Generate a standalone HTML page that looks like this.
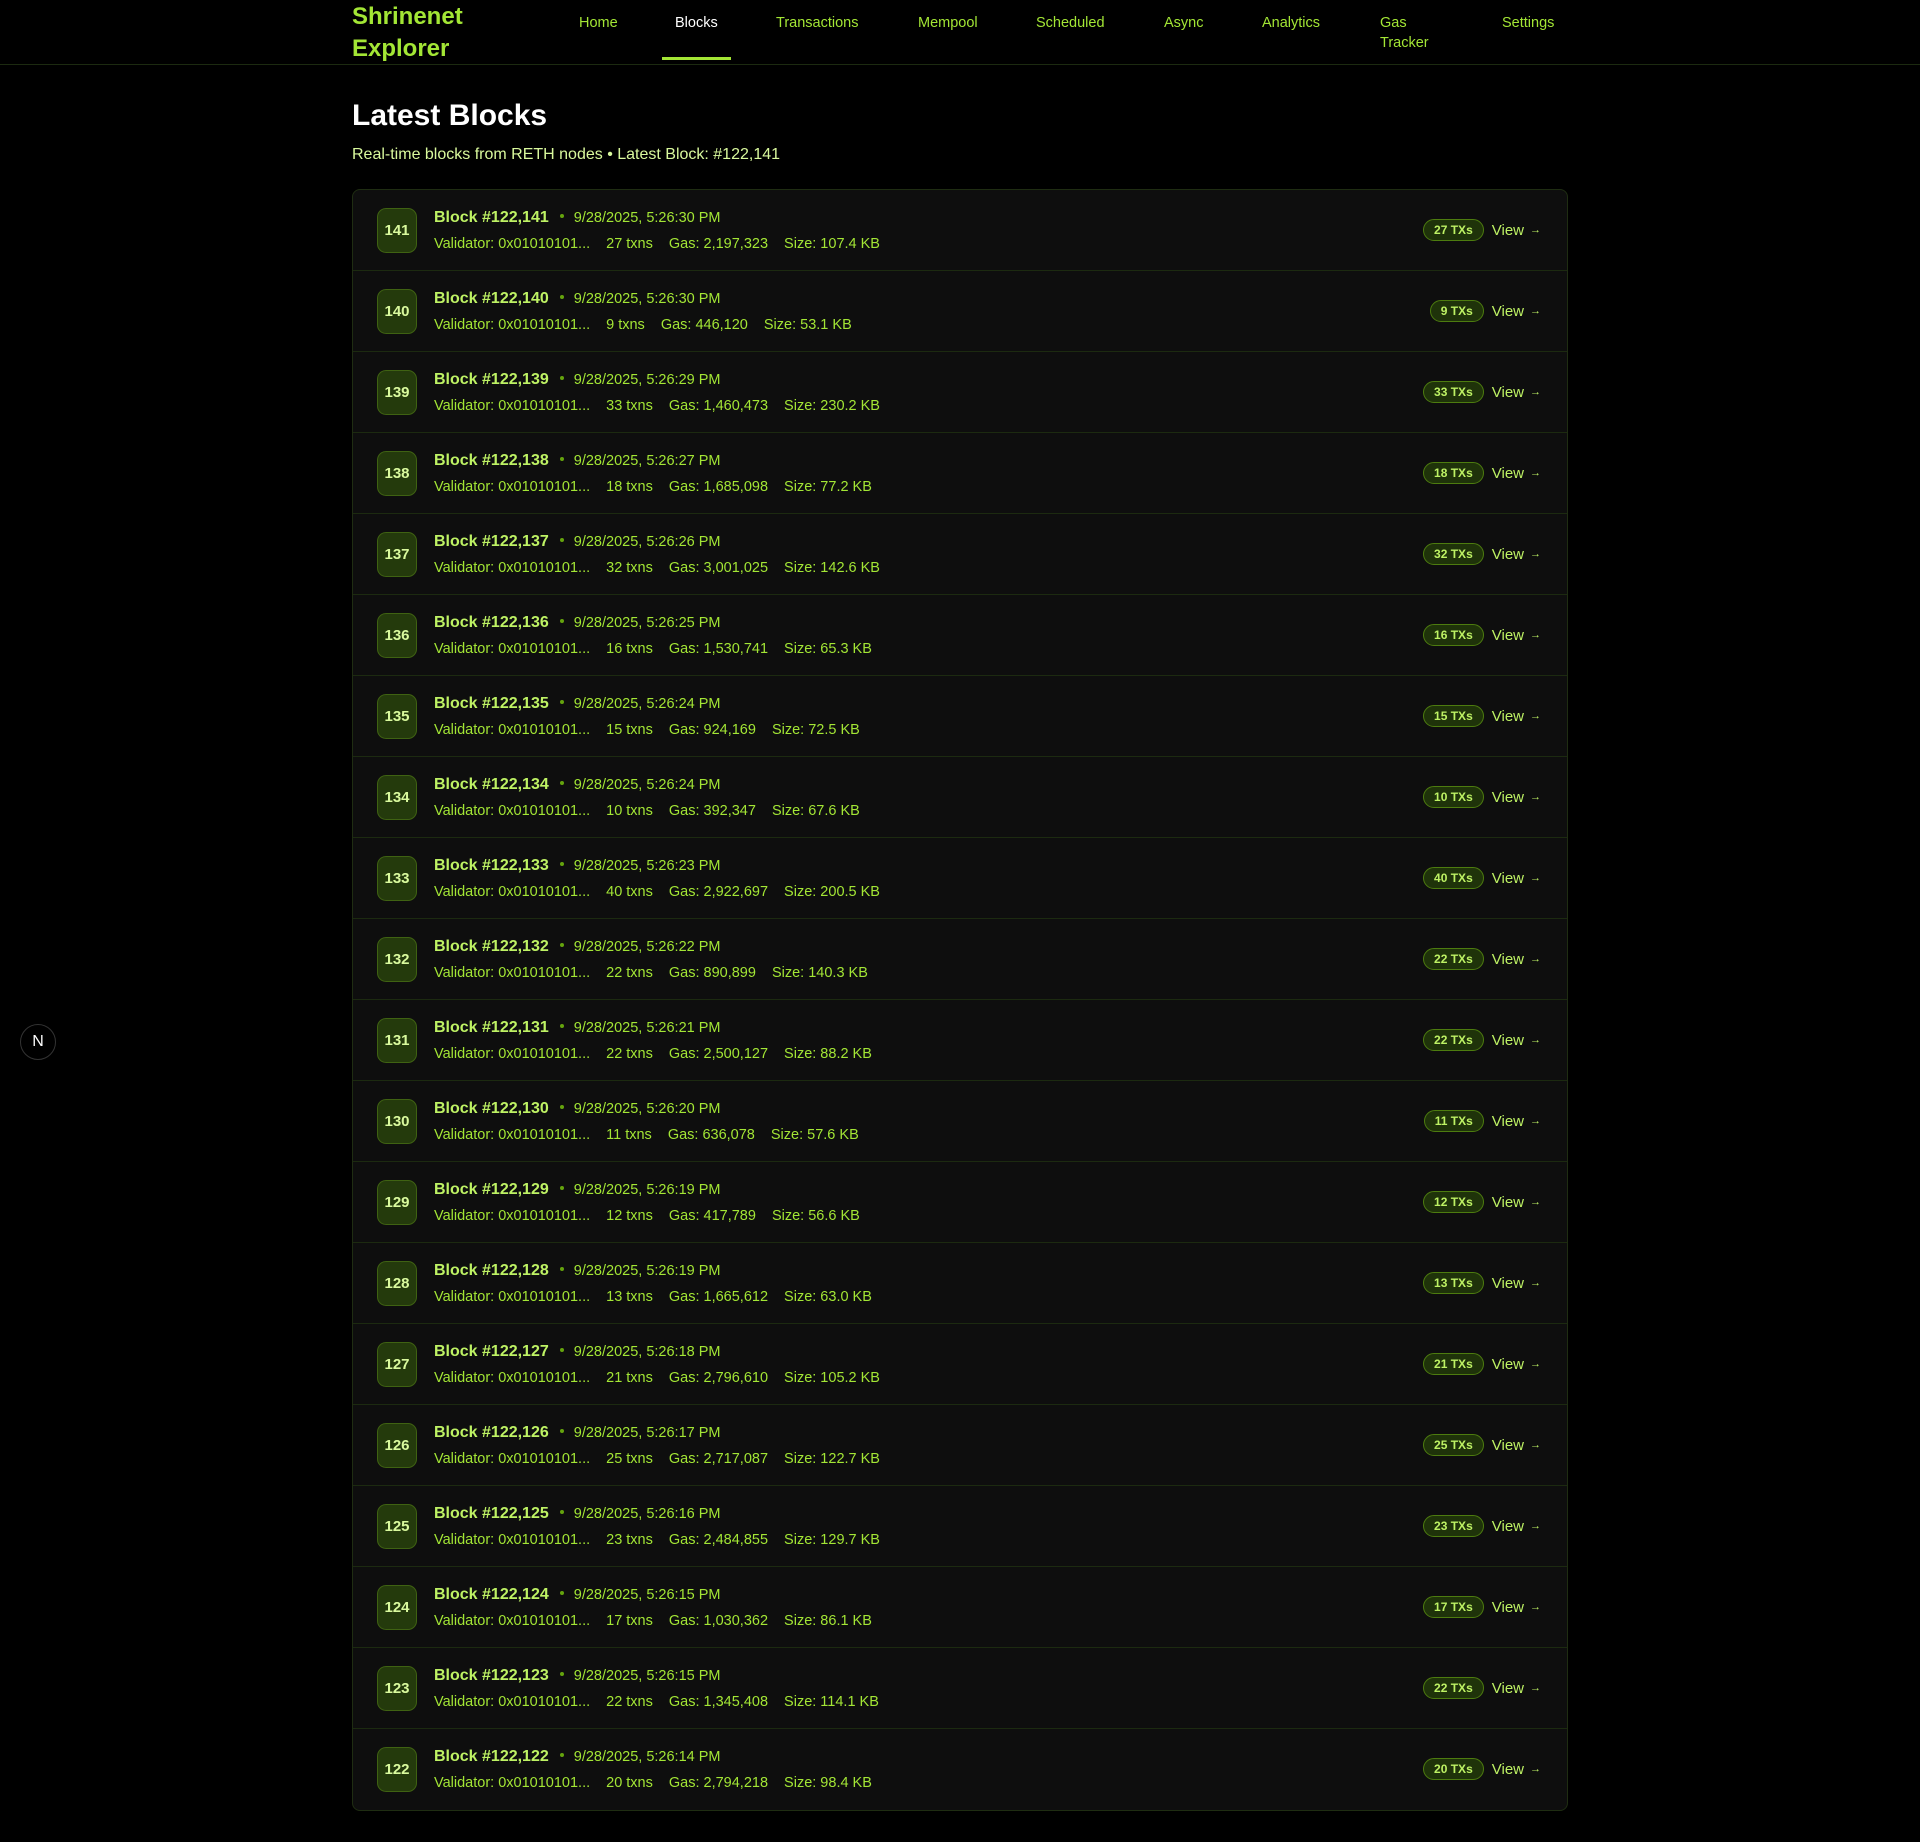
<!DOCTYPE html>
<html><head><meta charset="utf-8"><style>
*{box-sizing:border-box;margin:0;padding:0}
body{background:#000;width:1920px;height:1842px;font-family:"Liberation Sans",sans-serif;color:#a3e635;position:relative;overflow:hidden}
.hdr{height:65px;border-bottom:1px solid #1c2a10;position:relative}
.logo{position:absolute;left:352px;top:1px;font-size:24px;font-weight:bold;line-height:32px;color:#a3e635}
.nav a{position:absolute;top:13px;font-size:14.5px;line-height:20px;color:#a3e635;text-decoration:none}
.nav a.act{color:#fff}
.ul{position:absolute;left:662px;top:57px;width:69px;height:3px;background:#a3e635}
h1{position:absolute;left:352px;top:99px;font-size:30px;color:#fff;font-weight:bold}
.sub{position:absolute;left:352px;top:146px;font-size:16px;color:#d9f99d}
.card{position:absolute;left:352px;top:189px;width:1216px;height:1622px;background:#0e0e0e;border:1px solid #1f2d12;border-radius:8px;overflow:hidden}
.row{height:81px;border-bottom:1px solid #1c2a10;position:relative}
.row:last-child{border-bottom:none}
.bd{position:absolute;left:24px;top:18px;width:40px;height:45px;background:#243a0c;border:1px solid #3f6212;border-radius:9px;color:#d9f99d;font-weight:bold;font-size:15px;display:flex;align-items:center;justify-content:center}
.t{position:absolute;left:81px;top:19px;font-size:16px;font-weight:bold;color:#bef264;white-space:nowrap}
.t i{display:inline-block;width:4px;height:4px;border-radius:2px;background:#65a30d;margin:0 10px 3px 11px;vertical-align:middle}
.t span{font-weight:normal;font-size:14.5px;color:#a3e635}
.d{position:absolute;left:81px;top:46px;font-size:14.5px;white-space:nowrap}
.d span{margin-right:16px}
.r{position:absolute;right:26px;top:29px;display:flex;align-items:center}
.p{height:22px;padding:0 10px;border:1px solid #4d7c0f;background:#1f330a;border-radius:11px;font-size:12px;font-weight:bold;color:#bef264;line-height:20px;margin-right:8px}
.v{font-size:15px;color:#bef264;display:flex;align-items:center}
.v small{font-size:11px;margin-left:6px}
.n{position:absolute;left:20px;top:1024px;width:36px;height:36px;border-radius:18px;border:1.5px solid #333;background:#000;color:#fff;font-size:16px;display:flex;align-items:center;justify-content:center}
</style></head><body>
<div class="hdr">
<div class="logo">Shrinenet<br>Explorer</div>
<div class="nav">
<a style="left:579px">Home</a>
<a class="act" style="left:675px">Blocks</a>
<a style="left:776px">Transactions</a>
<a style="left:918px">Mempool</a>
<a style="left:1036px">Scheduled</a>
<a style="left:1164px">Async</a>
<a style="left:1262px">Analytics</a>
<a style="left:1380px">Gas<br>Tracker</a>
<a style="left:1502px">Settings</a>
</div>
<div class="ul"></div>
</div>
<h1>Latest Blocks</h1>
<div class="sub">Real-time blocks from RETH nodes • Latest Block: #122,141</div>
<div class="card">
<div class="row"><div class="bd">141</div><div class="t">Block #122,141<i></i><span>9/28/2025, 5:26:30 PM</span></div><div class="d"><span>Validator: 0x01010101...</span><span>27 txns</span><span>Gas: 2,197,323</span><span>Size: 107.4 KB</span></div><div class="r"><div class="p">27 TXs</div><div class="v">View<small>→</small></div></div></div>
<div class="row"><div class="bd">140</div><div class="t">Block #122,140<i></i><span>9/28/2025, 5:26:30 PM</span></div><div class="d"><span>Validator: 0x01010101...</span><span>9 txns</span><span>Gas: 446,120</span><span>Size: 53.1 KB</span></div><div class="r"><div class="p">9 TXs</div><div class="v">View<small>→</small></div></div></div>
<div class="row"><div class="bd">139</div><div class="t">Block #122,139<i></i><span>9/28/2025, 5:26:29 PM</span></div><div class="d"><span>Validator: 0x01010101...</span><span>33 txns</span><span>Gas: 1,460,473</span><span>Size: 230.2 KB</span></div><div class="r"><div class="p">33 TXs</div><div class="v">View<small>→</small></div></div></div>
<div class="row"><div class="bd">138</div><div class="t">Block #122,138<i></i><span>9/28/2025, 5:26:27 PM</span></div><div class="d"><span>Validator: 0x01010101...</span><span>18 txns</span><span>Gas: 1,685,098</span><span>Size: 77.2 KB</span></div><div class="r"><div class="p">18 TXs</div><div class="v">View<small>→</small></div></div></div>
<div class="row"><div class="bd">137</div><div class="t">Block #122,137<i></i><span>9/28/2025, 5:26:26 PM</span></div><div class="d"><span>Validator: 0x01010101...</span><span>32 txns</span><span>Gas: 3,001,025</span><span>Size: 142.6 KB</span></div><div class="r"><div class="p">32 TXs</div><div class="v">View<small>→</small></div></div></div>
<div class="row"><div class="bd">136</div><div class="t">Block #122,136<i></i><span>9/28/2025, 5:26:25 PM</span></div><div class="d"><span>Validator: 0x01010101...</span><span>16 txns</span><span>Gas: 1,530,741</span><span>Size: 65.3 KB</span></div><div class="r"><div class="p">16 TXs</div><div class="v">View<small>→</small></div></div></div>
<div class="row"><div class="bd">135</div><div class="t">Block #122,135<i></i><span>9/28/2025, 5:26:24 PM</span></div><div class="d"><span>Validator: 0x01010101...</span><span>15 txns</span><span>Gas: 924,169</span><span>Size: 72.5 KB</span></div><div class="r"><div class="p">15 TXs</div><div class="v">View<small>→</small></div></div></div>
<div class="row"><div class="bd">134</div><div class="t">Block #122,134<i></i><span>9/28/2025, 5:26:24 PM</span></div><div class="d"><span>Validator: 0x01010101...</span><span>10 txns</span><span>Gas: 392,347</span><span>Size: 67.6 KB</span></div><div class="r"><div class="p">10 TXs</div><div class="v">View<small>→</small></div></div></div>
<div class="row"><div class="bd">133</div><div class="t">Block #122,133<i></i><span>9/28/2025, 5:26:23 PM</span></div><div class="d"><span>Validator: 0x01010101...</span><span>40 txns</span><span>Gas: 2,922,697</span><span>Size: 200.5 KB</span></div><div class="r"><div class="p">40 TXs</div><div class="v">View<small>→</small></div></div></div>
<div class="row"><div class="bd">132</div><div class="t">Block #122,132<i></i><span>9/28/2025, 5:26:22 PM</span></div><div class="d"><span>Validator: 0x01010101...</span><span>22 txns</span><span>Gas: 890,899</span><span>Size: 140.3 KB</span></div><div class="r"><div class="p">22 TXs</div><div class="v">View<small>→</small></div></div></div>
<div class="row"><div class="bd">131</div><div class="t">Block #122,131<i></i><span>9/28/2025, 5:26:21 PM</span></div><div class="d"><span>Validator: 0x01010101...</span><span>22 txns</span><span>Gas: 2,500,127</span><span>Size: 88.2 KB</span></div><div class="r"><div class="p">22 TXs</div><div class="v">View<small>→</small></div></div></div>
<div class="row"><div class="bd">130</div><div class="t">Block #122,130<i></i><span>9/28/2025, 5:26:20 PM</span></div><div class="d"><span>Validator: 0x01010101...</span><span>11 txns</span><span>Gas: 636,078</span><span>Size: 57.6 KB</span></div><div class="r"><div class="p">11 TXs</div><div class="v">View<small>→</small></div></div></div>
<div class="row"><div class="bd">129</div><div class="t">Block #122,129<i></i><span>9/28/2025, 5:26:19 PM</span></div><div class="d"><span>Validator: 0x01010101...</span><span>12 txns</span><span>Gas: 417,789</span><span>Size: 56.6 KB</span></div><div class="r"><div class="p">12 TXs</div><div class="v">View<small>→</small></div></div></div>
<div class="row"><div class="bd">128</div><div class="t">Block #122,128<i></i><span>9/28/2025, 5:26:19 PM</span></div><div class="d"><span>Validator: 0x01010101...</span><span>13 txns</span><span>Gas: 1,665,612</span><span>Size: 63.0 KB</span></div><div class="r"><div class="p">13 TXs</div><div class="v">View<small>→</small></div></div></div>
<div class="row"><div class="bd">127</div><div class="t">Block #122,127<i></i><span>9/28/2025, 5:26:18 PM</span></div><div class="d"><span>Validator: 0x01010101...</span><span>21 txns</span><span>Gas: 2,796,610</span><span>Size: 105.2 KB</span></div><div class="r"><div class="p">21 TXs</div><div class="v">View<small>→</small></div></div></div>
<div class="row"><div class="bd">126</div><div class="t">Block #122,126<i></i><span>9/28/2025, 5:26:17 PM</span></div><div class="d"><span>Validator: 0x01010101...</span><span>25 txns</span><span>Gas: 2,717,087</span><span>Size: 122.7 KB</span></div><div class="r"><div class="p">25 TXs</div><div class="v">View<small>→</small></div></div></div>
<div class="row"><div class="bd">125</div><div class="t">Block #122,125<i></i><span>9/28/2025, 5:26:16 PM</span></div><div class="d"><span>Validator: 0x01010101...</span><span>23 txns</span><span>Gas: 2,484,855</span><span>Size: 129.7 KB</span></div><div class="r"><div class="p">23 TXs</div><div class="v">View<small>→</small></div></div></div>
<div class="row"><div class="bd">124</div><div class="t">Block #122,124<i></i><span>9/28/2025, 5:26:15 PM</span></div><div class="d"><span>Validator: 0x01010101...</span><span>17 txns</span><span>Gas: 1,030,362</span><span>Size: 86.1 KB</span></div><div class="r"><div class="p">17 TXs</div><div class="v">View<small>→</small></div></div></div>
<div class="row"><div class="bd">123</div><div class="t">Block #122,123<i></i><span>9/28/2025, 5:26:15 PM</span></div><div class="d"><span>Validator: 0x01010101...</span><span>22 txns</span><span>Gas: 1,345,408</span><span>Size: 114.1 KB</span></div><div class="r"><div class="p">22 TXs</div><div class="v">View<small>→</small></div></div></div>
<div class="row"><div class="bd">122</div><div class="t">Block #122,122<i></i><span>9/28/2025, 5:26:14 PM</span></div><div class="d"><span>Validator: 0x01010101...</span><span>20 txns</span><span>Gas: 2,794,218</span><span>Size: 98.4 KB</span></div><div class="r"><div class="p">20 TXs</div><div class="v">View<small>→</small></div></div></div>
</div>
<div class="n">N</div>
</body></html>
